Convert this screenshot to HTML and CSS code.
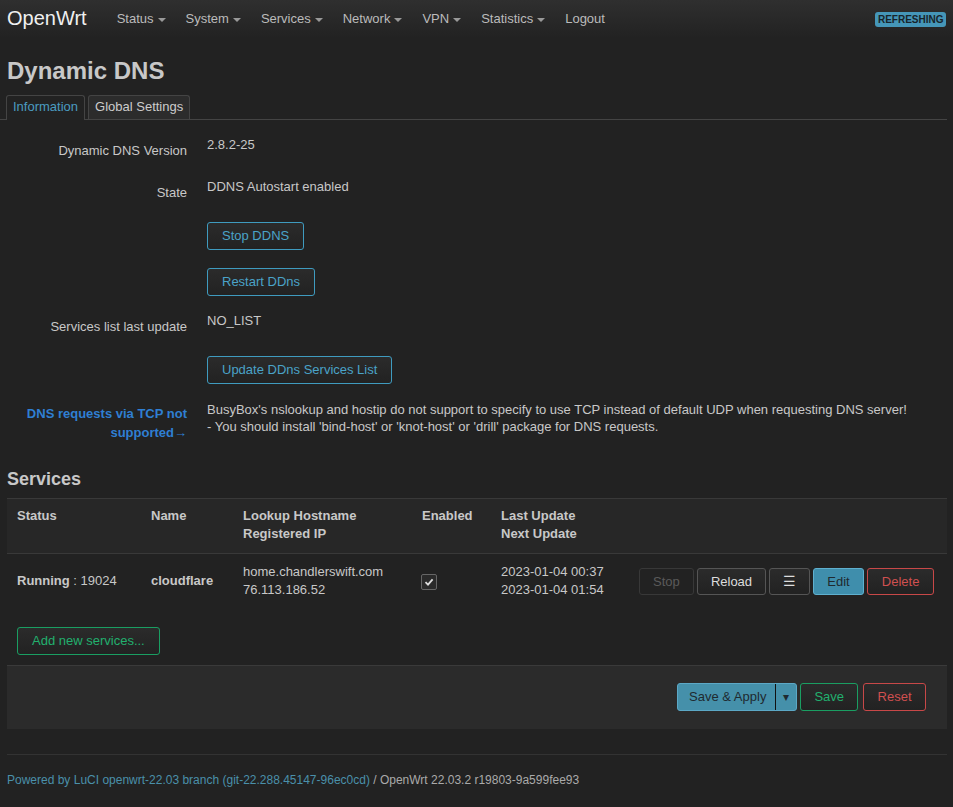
FILE: index.html
```html
<!DOCTYPE html>
<html>
<head>
<meta charset="utf-8">
<link rel="stylesheet" href="styles.css">
</head>
<body>
<header class="topbar">
  <a class="brand">OpenWrt</a>
  <nav class="nav">
    <a class="nav-item">Status<span class="caret"></span></a>
    <a class="nav-item">System<span class="caret"></span></a>
    <a class="nav-item">Services<span class="caret"></span></a>
    <a class="nav-item">Network<span class="caret"></span></a>
    <a class="nav-item">VPN<span class="caret"></span></a>
    <a class="nav-item">Statistics<span class="caret"></span></a>
    <a class="nav-item">Logout</a>
  </nav>
  <span class="badge">REFRESHING</span>
</header>

<main class="container">
  <h2 class="page-title">Dynamic DNS</h2>
  <ul class="tabs">
    <li class="tab active">Information</li>
    <li class="tab">Global Settings</li>
  </ul>

  <div class="form">
    <div class="row">
      <div class="label">Dynamic DNS Version</div>
      <div class="value">2.8.2-25</div>
    </div>
    <div class="row">
      <div class="label">State</div>
      <div class="value">DDNS Autostart enabled</div>
    </div>
    <div class="row row-after-text">
      <div class="label"></div>
      <div class="value"><button class="btn btn-blue">Stop DDNS</button></div>
    </div>
    <div class="row">
      <div class="label"></div>
      <div class="value"><button class="btn btn-blue">Restart DDns</button></div>
    </div>
    <div class="row row-after-btn">
      <div class="label">Services list last update</div>
      <div class="value">NO_LIST</div>
    </div>
    <div class="row row-after-text">
      <div class="label"></div>
      <div class="value"><button class="btn btn-blue">Update DDns Services List</button></div>
    </div>
    <div class="row row-warn">
      <div class="label label-warn">DNS requests via TCP not supported→</div>
      <div class="value value-multi">BusyBox's nslookup and hostip do not support to specify to use TCP instead of default UDP when requesting DNS server!<br>- You should install 'bind-host' or 'knot-host' or 'drill' package for DNS requests.</div>
    </div>
  </div>

  <h3 class="section-title">Services</h3>
  <table class="table">
    <colgroup>
      <col class="c1"><col class="c2"><col class="c3"><col class="c4"><col class="c5"><col class="c6">
    </colgroup>
    <thead>
      <tr>
        <th>Status</th>
        <th>Name</th>
        <th>Lookup Hostname<br>Registered IP</th>
        <th>Enabled</th>
        <th>Last Update<br>Next Update</th>
        <th></th>
      </tr>
    </thead>
    <tbody>
      <tr>
        <td><b>Running</b> : 19024</td>
        <td><b>cloudflare</b></td>
        <td>home.chandlerswift.com<br>76.113.186.52</td>
        <td><span class="checkbox"><svg width="12" height="12" viewBox="0 0 12 12"><path d="M2.5 6.2 L5 8.6 L9.6 3.4" fill="none" stroke="#ddd" stroke-width="1.8"/></svg></span></td>
        <td>2023-01-04 00:37<br>2023-01-04 01:54</td>
        <td class="actions">
          <button class="btn btn-disabled">Stop</button>
          <button class="btn btn-neutral">Reload</button>
          <button class="btn btn-neutral btn-menu">☰</button>
          <button class="btn btn-primary">Edit</button>
          <button class="btn btn-red">Delete</button>
        </td>
      </tr>
    </tbody>
  </table>
  <div class="create">
    <button class="btn btn-green">Add new services...</button>
  </div>

  <div class="page-actions">
    <div class="split">
      <span class="split-main">Save &amp; Apply</span><span class="split-arrow">▾</span>
    </div>
    <button class="btn btn-green btn-save">Save</button>
    <button class="btn btn-red btn-reset">Reset</button>
  </div>

  <footer class="footer">
    <a class="footer-link">Powered by LuCI openwrt-22.03 branch (git-22.288.45147-96ec0cd)</a> / OpenWrt 22.03.2 r19803-9a599fee93
  </footer>
</main>
</body>
</html>
```

FILE: styles.css
```css
html, body {
  margin: 0;
  padding: 0;
  background: #222;
  color: #c8c8c8;
  font-family: "Liberation Sans", Arial, sans-serif;
  font-size: 13px;
  line-height: 18px;
}

.topbar {
  display: flex;
  align-items: center;
  height: 38px;
  padding: 0 7px;
  background: linear-gradient(#2f2f2f, #222);
}
.brand {
  font-size: 20px;
  color: #f0f0f0;
  margin-right: 20px;
  line-height: 24px;
  margin-top: -3px;
}
.nav {
  display: flex;
  flex: 1;
}
.nav-item {
  padding: 0 10px;
  color: #bbb;
  display: flex;
  align-items: center;
}
.caret {
  display: inline-block;
  width: 0;
  height: 0;
  margin-left: 4px;
  margin-top: 2px;
  border-top: 4px solid #999;
  border-left: 4px solid transparent;
  border-right: 4px solid transparent;
}
.badge {
  background: #4596b8;
  color: #18242a;
  font-weight: bold;
  font-size: 10px;
  line-height: 13px;
  padding: 1px 2.5px;
  border-radius: 3px;
  margin-right: 0;
}

.container {
  padding: 0 6px 0 7px;
}
.page-title {
  font-size: 24px;
  line-height: 29px;
  margin: 18px 0 10px;
  color: #c8c8c8;
  font-weight: bold;
}

.tabs {
  list-style: none;
  margin: 0 0 0 -7px;
  padding: 0 0 0 6px;
  display: flex;
  gap: 3px;
  border-bottom: 1px solid #444;
  height: 24px;
}
.tab {
  height: 23px;
  padding: 0 6px;
  line-height: 22px;
  border: 1px solid #444;
  border-bottom: none;
  border-radius: 3px 3px 0 0;
  background: #2c2c2c;
  color: #ccc;
}
.tab.active {
  background: #222;
  color: #4a9cc0;
  height: 24px;
  margin-bottom: -1px;
}

.form {
  display: flex;
  flex-direction: column;
  gap: 18px;
  padding-top: 16px;
}
.row {
  display: flex;
  gap: 20px;
}
.row-after-text {
  margin-top: 2px;
}
.row-after-btn {
  margin-top: -2px;
}
.label {
  width: 180px;
  flex: none;
  text-align: right;
  padding-top: 6px;
}
.label:empty {
  padding-top: 0;
}
.row-warn {
  margin-top: -1px;
}
.label-warn {
  color: #2f7fd3;
  font-weight: bold;
  padding-top: 3px;
  line-height: 19px;
}
.value-multi {
  line-height: 17px;
}

.btn {
  font-family: "Liberation Sans", Arial, sans-serif;
  font-size: 13px;
  height: 28px;
  padding: 0 14px;
  border-radius: 3px;
  border: 1px solid #555;
  background: linear-gradient(#2b2b2b, #222);
  color: #ddd;
  line-height: 26px;
  cursor: pointer;
}
.btn-blue {
  border-color: #3f9bbf;
  color: #4aa3c8;
}
.btn-green {
  border-color: #1a9e62;
  color: #22b06e;
}
.btn-red {
  border-color: #c84848;
  color: #d05050;
}
.btn-disabled {
  border-color: #383838;
  color: #5a5a5a;
  background: #222;
}
.btn-neutral {
  border-color: #555;
  color: #ddd;
}
.btn-menu {
  font-size: 14px;
}
.btn-primary {
  background: #3f8eac;
  border-color: #5fb0cf;
  color: #1f2a30;
}

.section-title {
  font-size: 18px;
  line-height: 22px;
  margin: 26px 0 8px;
  font-weight: bold;
  color: #c8c8c8;
}

.table {
  width: 940px;
  border-collapse: collapse;
  table-layout: fixed;
}
.c1 { width: 134px; }
.c2 { width: 92px; }
.c3 { width: 179px; }
.c4 { width: 79px; }
.c5 { width: 138px; }
.c6 { width: 318px; }
.table thead tr {
  background: #272727;
  border-top: 1px solid #393939;
  border-bottom: 1px solid #393939;
}
.table th {
  text-align: left;
  vertical-align: top;
  font-weight: bold;
  padding: 8px 10px 10px;
  color: #c8c8c8;
}
.table td {
  padding: 9px 10px 10px;
  vertical-align: middle;
}
.table td.actions {
  white-space: nowrap;
  padding-left: 10px;
  padding-right: 0;
}
.actions .btn {
  margin-right: -0.5px;
  height: 27px;
  line-height: 25px;
  padding: 0 13px;
}
.actions .btn-red {
  padding: 0 14px;
}
.checkbox {
  display: inline-flex;
  align-items: center;
  justify-content: center;
  width: 14px;
  height: 14px;
  border: 1px solid #666;
  border-radius: 2px;
  background: #2a2a2a;
  vertical-align: middle;
  margin-left: -1px;
}

.create {
  padding: 18px 10px 10px;
}

.page-actions {
  display: flex;
  justify-content: flex-end;
  align-items: center;
  gap: 3px;
  background: #2b2b2b;
  border-top: 1px solid #3a3a3a;
  padding: 17px 21px 18px;
  height: 28px;
}
.page-actions .btn {
  height: 28px;
  line-height: 26px;
}
.btn-save {
  padding: 0 13px;
}
.btn-reset {
  margin-left: 2px;
  padding: 0 13.5px;
}
.split {
  display: flex;
  height: 26px;
  border: 1px solid #5ca8c6;
  border-radius: 3px;
  background: #4590aa;
  color: #1f2a30;
  line-height: 26px;
}
.split-main {
  padding: 0 9px 0 11px;
  border-right: 1px solid #111;
}
.split-arrow {
  padding: 0 7px 0 7px;
  font-size: 12px;
}

.footer {
  margin-top: 25px;
  border-top: 1px solid #333;
  padding-top: 16px;
  font-size: 12px;
  color: #aaa;
}
.footer-link {
  color: #4a90aa;
}
```
